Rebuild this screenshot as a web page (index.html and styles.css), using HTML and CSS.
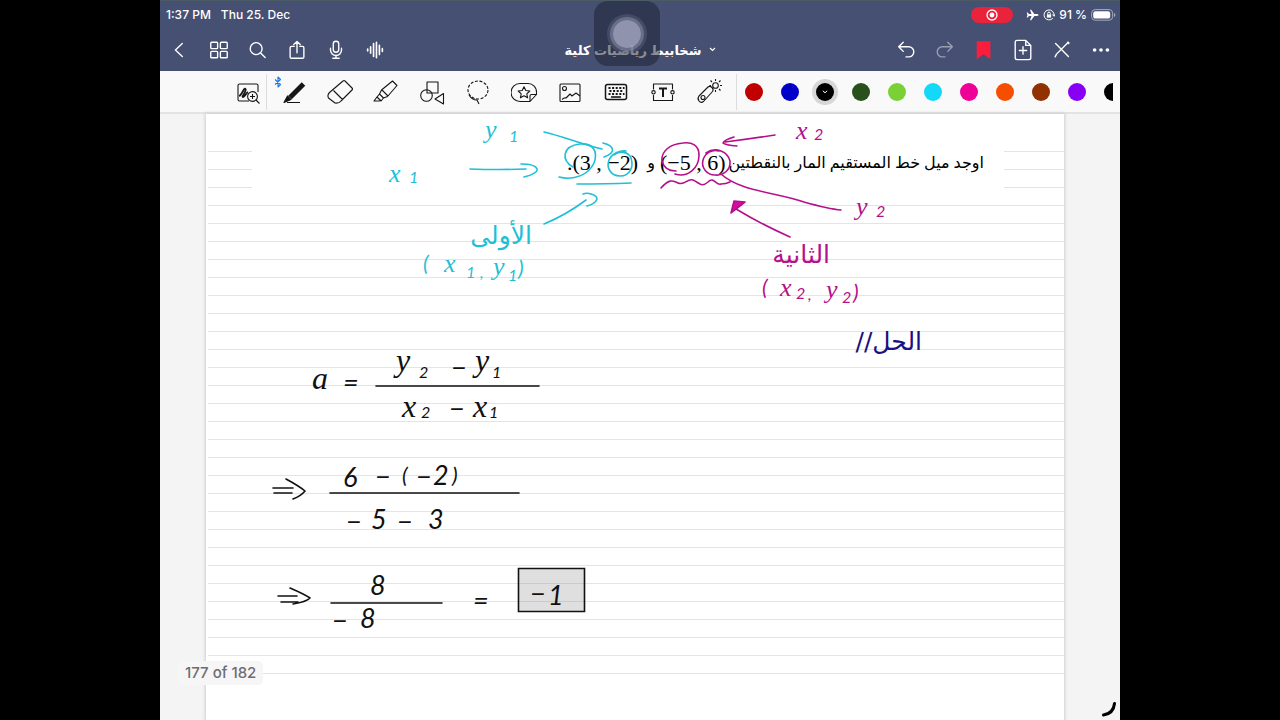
FILE: index.html
```html
<!DOCTYPE html>
<html lang="en">
<head>
<meta charset="utf-8">
<meta name="viewport" content="width=device-width, initial-scale=1">
<title>شخابيط رياضيات كلية</title>
<link rel="stylesheet" href="styles.css">
</head>
<body>
<div class="app">
  <header class="header">
    <div class="status">
      <span>1:37 PM</span>
      <span>Thu 25. Dec</span>
      <span class="record"><svg width="12" height="12" viewBox="0 0 12 12"><circle cx="6" cy="6" r="5" fill="none" stroke="#fff" stroke-width="1.3"/><circle cx="6" cy="6" r="2.4" fill="#fff"/></svg></span>
      <span class="indicators">
        <svg width="13" height="12" viewBox="0 0 13 12"><path fill="#fff" d="M12.5 6c0-.6-.8-.9-1.700-.9H8.400L5.200.7H4l1.500 4.400H3L1.700 3.500h-1L1.400 6 .7 8.500h1L3 6.900h2.500L4 11.300h1.200l3.200-4.400h2.400c.9 0 1.700-.3 1.700-.9z"/></svg>
        <svg width="12" height="12" viewBox="0 0 12 12" fill="none" stroke="#fff"><path d="M9.800 9.200A5 5 0 1 1 11 6.500M9.300 5.500 11 7.300 12 5.200"/><rect x="3.900" y="5.400" width="4.200" height="3.200" fill="#fff" stroke="none"/><path d="M4.700 5.500V4.400a1.300 1.300 0 0 1 2.600 0v1.100"/></svg>
        <span>91 %</span>
        <svg width="25" height="12" viewBox="0 0 25 12"><rect x=".6" y=".6" width="21" height="10.600" rx="3.500" fill="none" stroke="#a4aac0"/><rect x="2.200" y="2.200" width="17" height="7.400" rx="2.200" fill="#fff"/><path d="M23 4v4q1.400-.5 1.400-2T23 4z" fill="#a4aac0"/></svg>
      </span>
    </div>
    <nav class="nav">
      <div class="group">
        <button class="icon" aria-label="Back"><svg viewBox="0 0 24 24"><path d="M14.500 5 7 12l7.500 7"/></svg></button>
        <button class="icon" aria-label="Pages"><svg viewBox="0 0 24 24"><rect x="3" y="3.500" width="7.500" height="7" rx="1"/><rect x="13.500" y="3.500" width="7.500" height="7" rx="1"/><rect x="3" y="13.500" width="7.500" height="7" rx="1"/><rect x="13.500" y="13.500" width="7.500" height="7" rx="1"/></svg></button>
        <button class="icon" aria-label="Search"><svg viewBox="0 0 24 24"><circle cx="10" cy="10.500" r="6.500"/><path d="m14.800 15.300 5 5"/></svg></button>
        <button class="icon" aria-label="Share"><svg viewBox="0 0 24 24"><path d="M9 8H6Q4.500 8 4.500 9.500v10Q4.500 21 6 21h12q1.500 0 1.500-1.500v-10Q19.500 8 18 8h-3M12 15V3M8.500 6 12 2.800 15.500 6"/></svg></button>
        <button class="icon" aria-label="Record"><svg viewBox="0 0 24 24"><rect x="9" y="2.500" width="6" height="12" rx="3"/><path d="M6 10v2a6 6 0 0 0 12 0v-2M12 18v3M8.500 21h7"/></svg></button>
        <button class="icon" aria-label="Audio"><svg viewBox="0 0 24 24"><path d="M4 11v2M7.200 8.500v7M10.400 5v14M13.600 3.500v17M16.800 7v10M20 10.500v3" stroke-width="1.800"/></svg></button>
      </div>
      <button class="doc-title"><span lang="ar" dir="rtl">شخابيط رياضيات كلية</span><svg width="7" height="5" viewBox="0 0 7 5"><path d="m1 1 2.500 2.500L6 1" fill="none" stroke="#fff" stroke-width="1.200"/></svg></button>
      <div class="group right">
        <button class="icon" aria-label="Undo"><svg viewBox="0 0 24 24"><path d="M9 3.500 4 8.500l5 5M4 8.500h11a5 5 0 0 1 0 11h-3"/></svg></button>
        <button class="icon dim" aria-label="Redo"><svg viewBox="0 0 24 24"><path d="m15 3.500 5 5-5 5M20 8.500H9a5 5 0 0 0 0 11h3"/></svg></button>
        <button class="icon" aria-label="Bookmark"><svg viewBox="0 0 24 24"><path class="mark" d="M4 2.500h15v19.500l-7.500-5.500L4 22z"/></svg></button>
        <button class="icon" aria-label="Add page"><svg viewBox="0 0 24 24"><path d="M15 1.500H5.500Q3.500 1.500 3.500 3.500v17q0 2 2 2h13q2 0 2-2V7zM15 1.500V7h5.500M12 8.500v8M8 12.500h8"/></svg></button>
        <button class="icon" aria-label="Read-only mode"><svg viewBox="0 0 24 24"><path d="m5 5 14 14M4.500 19.500l1.500-3L17.500 5"/><path d="m18.500 4 .5.500" stroke-width="2.500"/></svg></button>
        <button class="icon" aria-label="More"><svg viewBox="0 0 24 24"><g fill="#fff" stroke="none"><circle cx="5" cy="12" r="2"/><circle cx="12" cy="12" r="2"/><circle cx="19" cy="12" r="2"/></g></svg></button>
      </div>
    </nav>
    <div class="assist"><span></span></div>
  </header>

  <div class="toolbar" role="toolbar" aria-label="Drawing tools">
    <button class="tool zoom" aria-label="Zoom window"><svg viewBox="0 0 26 26"><path d="M14 22H4.500Q3 22 3 20.500v-14Q3 5 4.500 5h17Q23 5 23 6.500V13"/><path stroke-width="1.800" d="M4 17c3-1 5-9 6.500-7s-4.500 8-2.500 8 3-4 5-5"/><circle cx="17.500" cy="17.500" r="4.900"/><path d="m21 21 3.500 3.500M15 17.500h5M17.500 15v5"/></svg></button>
    <div class="tools">
      <button class="tool" aria-label="Pen"><svg viewBox="0 0 26 26"><path d="M22.500 5 9 18.500" stroke-width="5"/><path d="M6.500 17 3 23.500l7-3z" fill="#111"/><path d="M6 23.500h13" stroke-width="1"/></svg><svg class="bluetooth" viewBox="0 0 8 12"><path d="m1 3.500 5.500 5L4 11V1l2.500 2.500L1 8.500"/></svg></button>
      <button class="tool" aria-label="Eraser"><svg viewBox="0 0 26 26"><path d="M16 2q1-1 2 0l7 7q1 1 0 2L14 22q-2 2.500-6 2L1.500 19q-1.500-3 1-5.500zM6.500 11.500l9 9"/></svg></button>
      <button class="tool" aria-label="Highlighter"><svg viewBox="0 0 26 26"><path d="m19.500 2 4.500 4.500-9.500 11-4 1.500-4-4 2-4zM9 11l6 6M6.500 15l-2.500 3 4 4 2.500-3M4 18l-3 4h5l2-1"/></svg></button>
      <button class="tool" aria-label="Shapes"><svg viewBox="0 0 26 26"><rect x="8" y="3" width="11" height="11"/><circle cx="7.500" cy="16.500" r="5.800"/><path d="m24.500 14.500-8.500 5.500 8.500 5z"/></svg></button>
      <button class="tool" aria-label="Lasso"><svg viewBox="0 0 26 26"><ellipse cx="13" cy="11" rx="10" ry="9" stroke-dasharray="3 1.600"/><path d="M4 16q3 5 8 5l2 4"/></svg></button>
      <button class="tool" aria-label="Stickers"><svg viewBox="0 0 26 26"><path d="M19 22.500H9a9 9 0 0 1 0-18h8a8.500 8.500 0 0 1 8.500 9v2zM19 22.500V17q0-1.500 1.500-1.500h5"/><path d="m13 7.800 1.800 3.700 4 .5-3 2.800.8 4-3.600-2-3.600 2 .8-4-3-2.800 4-.5z"/></svg></button>
      <button class="tool" aria-label="Image"><svg viewBox="0 0 26 26"><rect x="3" y="5" width="20" height="17.500" rx="1"/><circle cx="7.500" cy="9.500" r="2"/><path d="M5 20.500q2-2 4-1.500l4-4 2 2 4-3 4 3"/></svg></button>
      <button class="tool" aria-label="Keyboard"><svg viewBox="0 0 26 26"><rect x="2.500" y="5.500" width="21" height="15" rx="2" stroke-width="1.500"/><path stroke-width="2" stroke-dasharray="2 1.600" d="M5.500 9h16M6.500 12h14M5.500 15h16"/><path stroke-width="1.600" d="M8 18h10"/></svg></button>
      <button class="tool" aria-label="Text box"><svg viewBox="0 0 26 26"><path d="M3.500 10.500V5h19v5.500M3.500 16v5.500h19V16"/><circle cx="3.500" cy="13.300" r="1.700"/><circle cx="22.500" cy="13.300" r="1.700"/><path stroke-width="2" d="M9 9.500h8M13 9.500V18"/></svg></button>
      <button class="tool" aria-label="Laser pointer"><svg viewBox="0 0 26 26"><path d="m3 17 9-9q2-1.500 4 .5t.5 4l-9 10q-2.500 2-4.500-.5t0-5z"/><circle cx="7" cy="18.500" r="2"/><circle cx="19.500" cy="6.500" r="2.800"/><path d="M19.500 0v2M19.500 11v2M13.500 6.500h1.500M24 6.500h2M23 3l1.500-1.500M23 10l1.500 1.500M16 3l-1.500-1.500"/></svg></button>
    </div>
    <div class="colors">
      <button class="dot red" aria-label="Red"></button>
      <button class="dot blue" aria-label="Blue"></button>
      <button class="dot black selected" aria-label="Black"><svg width="6" height="4" viewBox="0 0 6 4"><path d="m.8.8 2.200 2 2.200-2" fill="none" stroke="#fff"/></svg></button>
      <button class="dot forest" aria-label="Dark green"></button>
      <button class="dot lime" aria-label="Green"></button>
      <button class="dot sky" aria-label="Cyan"></button>
      <button class="dot pink" aria-label="Pink"></button>
      <button class="dot orange" aria-label="Orange"></button>
      <button class="dot brown" aria-label="Brown"></button>
      <button class="dot purple" aria-label="Purple"></button>
      <button class="dot black half" aria-label="Black"></button>
    </div>
  </div>

  <main class="desk">
    <div class="paper">
      <svg class="canvas" viewBox="206 114 858 606" preserveAspectRatio="xMidYMin meet">
        <defs><pattern id="rules" x="0" y="151" width="18" height="18" patternUnits="userSpaceOnUse"><rect width="18" height="1" fill="#e3e4e6"/></pattern></defs>
        <rect x="208" y="151" width="856" height="523" fill="url(#rules)"/>
        <rect x="252" y="116" width="752" height="82" fill="#fff"/>

        <g class="print">
          <text class="ar" x="984" y="168" direction="rtl">اوجد ميل خط المستقيم المار بالنقطتين</text>
          <text x="660" y="170">(−5 , 6)</text>
          <text class="ar" x="655" y="168" direction="rtl">و</text>
          <text x="567" y="170">.(3 , −2)</text>
        </g>

        <g class="ink cyan">
          <text class="v" x="485" y="138">y</text><text class="s" x="509" y="142">1</text>
          <text class="v" x="389" y="182">x</text><text class="s" x="409" y="183">1</text>
          <path d="M544 132c18 4 40 13 58 17M603 143c12 3 13 10 1 14M470 169q30 1 56 0M521 164c9 0 15 2 16 5s-5 6-13 8"/>
          <path d="M573 167C561 160 562 146 580 144c14-1 18 8 14 19-5 11-19 18-35 14"/>
          <path d="M614 155c5-5 15-3 17 3 3 9-1 18-11 18-9 0-14-8-11-16 3-7 12-10 17-9M577 184q30 0 54-1M544 224q22-9 42-24M583 194c5-2 14 1 14 5q-2 5-10 7"/>
          <text class="word" x="532" y="244" direction="rtl">الأولى</text>
          <text class="p" x="423" y="271">(</text><text class="v" x="444" y="272">x</text><text class="s" x="466" y="278">1</text><text class="s" x="480" y="278">,</text>
          <text class="v" x="493" y="275">y</text><text class="s" x="508" y="281">1</text><text class="p" x="518" y="276">)</text>
        </g>

        <g class="ink magenta">
          <text class="v" x="796" y="139">x</text><text class="s" x="814" y="140">2</text>
          <path d="M775 135q-26 4-50 7M734 137q-10 3-11 6 2 2 14 3"/>
          <path d="M675 174c13 4 24-6 24-19 0-10-7-13-16-12-14 1-22 9-21 18 2 8 8 10 14 10"/>
          <path d="M706 153c10-7 22-1 24 8 1 9-7 15-15 14-8 0-14-7-12-15 2-7 9-11 16-9"/>
          <path d="M661 188c9-10 12-7 17-5 7 3 9-5 15-3 7 3 8 8 15 2 6-6 8 4 13 2q5 0 9-2M721 174c20 18 55 18 83 28q25 7 37 8M790 237q-29-13-54-28"/>
          <path class="solid" d="M731 213 734 201l11 1-9 7z"/>
          <text class="v" x="856" y="215">y</text><text class="s" x="876" y="217">2</text>
          <text class="word" x="830" y="263" direction="rtl">الثانية</text>
          <text class="p" x="762" y="295">(</text><text class="v" x="780" y="296">x</text><text class="s" x="796" y="299">2</text><text class="s" x="808" y="300">,</text>
          <text class="v" x="826" y="298">y</text><text class="s" x="842" y="303">2</text><text class="p" x="853" y="300">)</text>
        </g>

        <g class="ink navy"><text class="word" x="922" y="350" direction="rtl">الحل//</text></g>

        <g class="ink">
          <text class="v big" x="312" y="389">a</text><text class="n" x="343" y="392">=</text>
          <text class="v big" x="396" y="371">y</text><text class="s" x="419" y="378">2</text><text class="n" x="451" y="377">−</text><text class="v big" x="475" y="371">y</text><text class="s" x="492" y="378">1</text>
          <path d="M376 386h163"/>
          <text class="v big" x="402" y="417">x</text><text class="s" x="421" y="418">2</text><text class="n" x="449" y="418">−</text><text class="v big" x="473" y="417">x</text><text class="s" x="489" y="418">1</text>

          <path d="M273 488h20M274 493h18M286 479q13 7 19 12-4 5-12 8M330 493h189"/>
          <text class="n" x="343" y="487">6</text><text class="n" x="375" y="486">−</text><text class="p" x="402" y="483">(</text><text class="n" x="416" y="486">−</text><text class="n" x="433" y="485">2</text><text class="p" x="452" y="483">)</text>
          <text class="n" x="346" y="531">−</text><text class="n" x="371" y="529">5</text><text class="n" x="397" y="531">−</text><text class="n" x="428" y="529">3</text>

          <path d="M278 596h19M281 602h17M290 588q14 6 20 10-4 4-17 6M331 603h111"/>
          <text class="n" x="370" y="595">8</text><text class="n" x="332" y="630">−</text><text class="n" x="360" y="628">8</text><text class="n" x="473" y="610">=</text>
          <path class="answer" d="M518.500 568.500h66v43h-66z"/>
          <text class="n" x="530" y="603">−</text><text class="n" x="548" y="605">1</text>
        </g>
      </svg>
    </div>
    <div class="page-count">177 of 182</div>
    <svg class="corner" width="14" height="15" viewBox="0 0 14 15"><path d="M12.500 1.500q-1 10-11 11.500" fill="none" stroke="#000" stroke-width="3" stroke-linecap="round"/></svg>
  </main>
</div>
</body>
</html>
```
FILE: styles.css
```css
* { box-sizing: border-box; }
body {
  margin: 0;
  background: #000;
  font-family: Inter, "Liberation Sans", sans-serif;
}
button { border: 0; padding: 0; background: none; color: inherit; font: inherit; }
svg { display: block; }

.app {
  display: flex;
  flex-direction: column;
  width: 75%;
  height: 100vh;
  margin: 0 auto;
  background: #f4f4f5;
  overflow: hidden;
}

.header {
  position: relative;
  background: #465072;
  color: #fff;
  border-top: 1px solid #4b5b63;
}
.status {
  display: flex;
  align-items: center;
  gap: 10px;
  height: 27px;
  padding: 0 4px 0 6px;
  font-size: 12px;
  font-weight: 500;
}
.record {
  display: grid;
  place-items: center;
  width: 42px;
  height: 16px;
  margin-left: auto;
  border-radius: 8px;
  background: #e9233c;
}
.indicators { display: flex; align-items: center; gap: 4px; margin-left: 3px; }

.nav {
  display: grid;
  grid-template-columns: 1fr auto 1fr;
  align-items: center;
  height: 43px;
}
.group { display: flex; }
.right { justify-content: flex-end; }
.icon { display: grid; place-items: center; width: 39px; height: 40px; }
.icon svg {
  width: 22px;
  height: 22px;
  fill: none;
  stroke: #fff;
  stroke-width: 1.5;
  stroke-linecap: round;
  stroke-linejoin: round;
}
.icon.dim { opacity: 0.45; }
.icon .mark { fill: #fb1d3c; stroke: none; }
.doc-title {
  display: flex;
  align-items: center;
  gap: 7px;
  font: bold 13px "Noto Sans", "DejaVu Sans", sans-serif;
}
.assist {
  position: absolute;
  top: 0;
  left: 50%;
  display: grid;
  place-items: center;
  width: 66px;
  height: 65px;
  margin-left: -46px;
  border-radius: 14px;
  background: rgba(26, 30, 46, 0.5);
}
.assist span {
  width: 28px;
  height: 28px;
  border-radius: 50%;
  background: rgba(160, 163, 190, 0.86);
  box-shadow: 0 0 0 3px rgba(130, 135, 160, 0.6), 0 0 0 6px rgba(100, 106, 135, 0.4);
}

.toolbar {
  display: flex;
  align-items: center;
  height: 43px;
  flex: none;
  padding: 0 7px 0 70px;
  background: #f9f9fa;
  border-bottom: 2px solid #e3e3e5;
}
.tool { position: relative; display: grid; place-items: center; height: 36px; }
.tool svg {
  width: 26px;
  height: 26px;
  fill: none;
  stroke: #161616;
  stroke-width: 1.1;
  stroke-linejoin: round;
}
.zoom { width: 37px; border-right: 1px solid #dcdcde; }
.tools { display: flex; flex: 5 1 0; padding: 0 4px; border-right: 1px solid #dcdcde; }
.tools .tool { flex: 1; }
.tool .bluetooth {
  position: absolute;
  top: 2px;
  left: 3px;
  width: 8px;
  height: 12px;
  stroke: #1478f0;
}
.colors { display: flex; flex: 4 1 0; justify-content: space-between; padding-left: 8px; }
.dot { display: grid; place-items: center; width: 18px; height: 18px; border-radius: 50%; }
.selected { box-shadow: 0 0 0 4px #d7d7d9; }
.half { width: 9px; border-radius: 9px 0 0 9px; }
.red { background: #c00000; }
.blue { background: #0000c8; }
.black { background: #000; }
.forest { background: #29501b; }
.lime { background: #79d136; }
.sky { background: #14d8f8; }
.pink { background: #ef0097; }
.orange { background: #f54e00; }
.brown { background: #913000; }
.purple { background: #8700f5; }

.desk { position: relative; flex: 1; min-height: 0; padding: 0 56px 0 46px; }
.paper {
  height: 100%;
  background: #fff;
  overflow: hidden;
  box-shadow: 0 0 3px 1px #cfcfd1;
}
.canvas { width: 100%; }
.print { font: 22px "Liberation Serif", serif; }
.print .ar { font: 16px "Liberation Serif", "DejaVu Sans", serif; }
.ink { fill: #111; }
.ink path { fill: none; stroke: #111; stroke-width: 1.6; stroke-linecap: round; stroke-linejoin: round; }
.cyan { fill: #1fbfd6; }
.cyan path { stroke: #1fbfd6; }
.magenta { fill: #b5108c; }
.magenta path { stroke: #b5108c; }
.magenta .solid { fill: #d0109c; }
.navy { fill: #1c0f80; }
.ink .answer { fill: rgba(120, 120, 120, 0.24); stroke-linejoin: miter; }
.v { font: italic 26px "Liberation Serif", serif; }
.big { font-size: 32px; }
.s { font: italic 16px Lato, sans-serif; }
.n { font: italic 27px Lato, sans-serif; }
.p { font: italic 22px Lato, sans-serif; }
.word { font: 25px "DejaVu Sans", sans-serif; }

.page-count {
  position: absolute;
  left: 18px;
  bottom: 35px;
  padding: 2px 7px;
  border-radius: 5px;
  background: #f6f6f7;
  color: #6d6d70;
  font-size: 15px;
  font-weight: 500;
  line-height: 20px;
}
.corner { position: absolute; right: 4px; bottom: 3px; }
```
